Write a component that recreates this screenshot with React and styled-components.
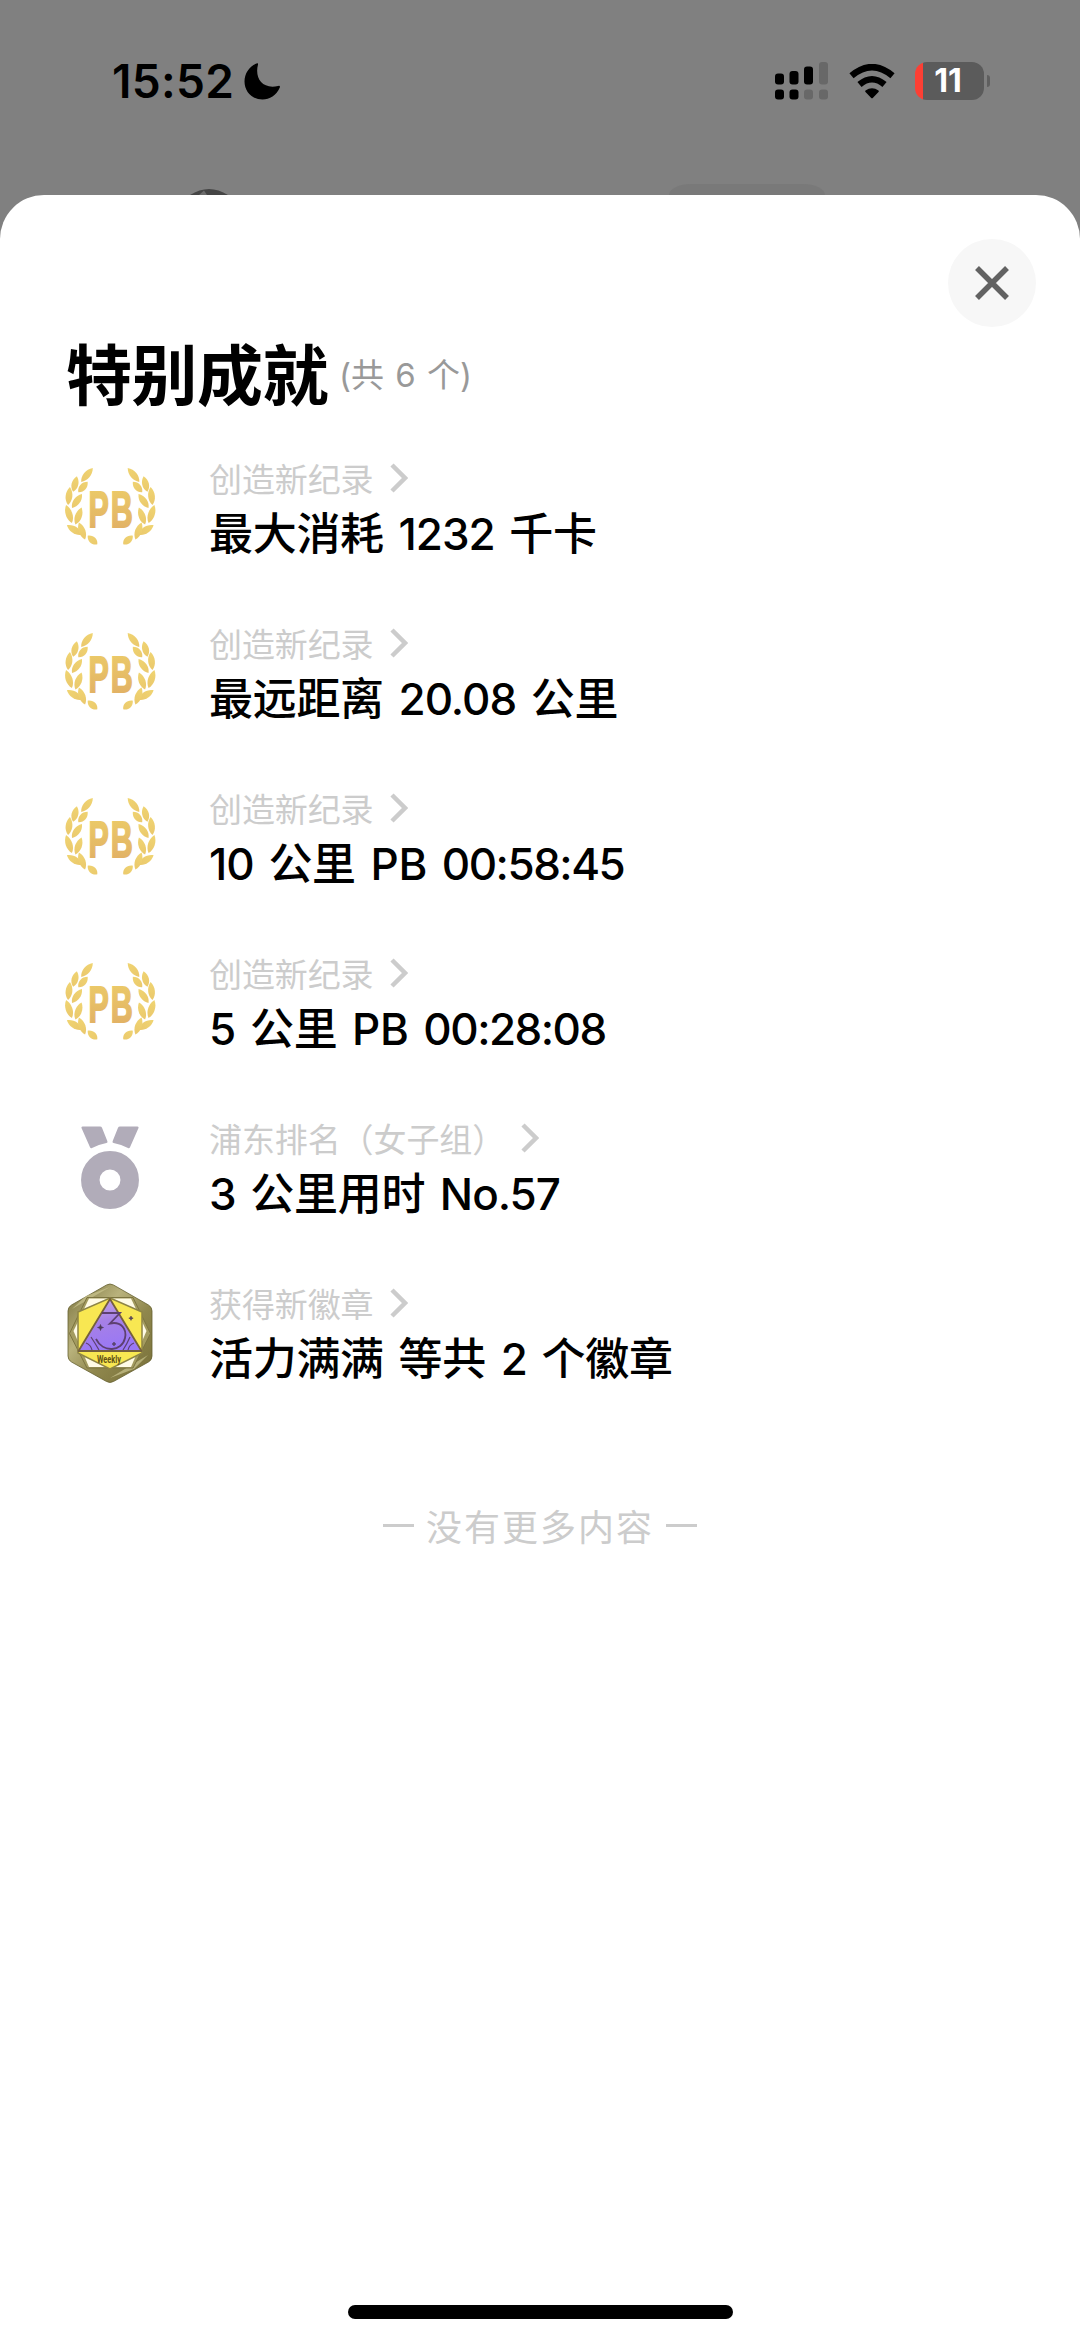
import React from "react"
import styled, { createGlobalStyle } from "styled-components"

const GlobalStyle = createGlobalStyle`
  * {
    box-sizing: border-box;
  }
  body {
    margin: 0;
    background: #808080;
    font-family: Inter, "Noto Sans CJK SC", sans-serif;
  }
`

const achievements = [
  { icon: "pb", label: "创造新纪录", title: "最大消耗 1232 千卡" },
  { icon: "pb", label: "创造新纪录", title: "最远距离 20.08 公里" },
  { icon: "pb", label: "创造新纪录", title: "10 公里 PB 00:58:45" },
  { icon: "pb", label: "创造新纪录", title: "5 公里 PB 00:28:08" },
  { icon: "medal", label: "浦东排名（女子组）", title: "3 公里用时 No.57" },
  { icon: "badge", label: "获得新徽章", title: "活力满满 等共 2 个徽章" },
]

// leaves of the left branch: x, y, rotation, length
const leaves = [
  [37, 25, 40, 18],
  [25, 34, 14, 16],
  [33, 37, 42, 14],
  [19, 46, 6, 18],
  [27, 51, 36, 17],
  [19, 64, -18, 19],
  [28.5, 66, 20, 18],
  [24.5, 80, -58, 18],
  [32, 81, -20, 18],
  [42.5, 90, -48, 13],
]

const Branch = () => (
  <g fill="url(#gold)">
    {leaves.map(([x, y, r, l], i) => (
      <path
        key={i}
        transform={`translate(${x} ${y}) rotate(${r})`}
        d={`M0 ${-l / 2} C4.6 ${-l / 5} 4.4 ${l / 4} 0 ${l / 2} C-4.4 ${l / 4} -4.6 ${-l / 5} 0 ${-l / 2}Z`}
      />
    ))}
  </g>
)

const PbIcon = () => (
  <svg width="120" height="110" viewBox="0 0 120 110">
    <defs>
      <linearGradient id="gold" gradientUnits="userSpaceOnUse" x1="0" y1="-10" x2="0" y2="10">
        <stop offset="0" stopColor="#f0d572" />
        <stop offset="1" stopColor="#eac76c" />
      </linearGradient>
      <linearGradient id="letters" gradientUnits="userSpaceOnUse" x1="0" y1="40" x2="0" y2="78">
        <stop offset="0" stopColor="#ebc968" />
        <stop offset="1" stopColor="#e2b265" />
      </linearGradient>
    </defs>
    <Branch />
    <g transform="translate(120.500 0) scale(-1 1)">
      <Branch />
    </g>
    <PbText x="38.500" y="76.500" textLength="46" lengthAdjust="spacingAndGlyphs">
      PB
    </PbText>
  </svg>
)

const MedalIcon = () => (
  <svg width="120" height="110" viewBox="0 0 120 110" fill="#b1acb9">
    <path d="M32.500 16.500H50q1.500 0 2 1.200l5.400 13.600q.5 1.500-1 1.800-7.800 1.300-14.400 5-1.300.7-2-.8L31.500 18q-.5-1.500 1-1.500Z" />
    <path d="M87.500 16.500H70q-1.500 0-2 1.200l-5.400 13.600q-.5 1.500 1 1.800 7.800 1.300 14.400 5 1.300.7 2-.8l8.500-19.300q.5-1.500-1-1.500Z" />
    <circle cx="60" cy="70" r="19.700" fill="none" stroke="#b1acb9" strokeWidth="18.500" />
  </svg>
)

const WeeklyBadge = () => (
  <svg width="120" height="120" viewBox="0 0 120 120">
    <defs>
      <linearGradient id="rim" x1="0" y1="0" x2="1" y2="1">
        <stop offset="0" stopColor="#77703b" />
        <stop offset="0.35" stopColor="#b9b27c" />
        <stop offset="0.6" stopColor="#8f874d" />
        <stop offset="1" stopColor="#766e38" />
      </linearGradient>
      <linearGradient id="violet" x1="0" y1="0" x2="0.3" y2="1">
        <stop offset="0" stopColor="#c9aee6" />
        <stop offset="0.5" stopColor="#a680e6" />
        <stop offset="1" stopColor="#9a78f5" />
      </linearGradient>
    </defs>
    <path
      d="M56.500 10Q60 8 63.500 10L98.500 30Q102 32 102 36V81Q102 85 98.500 87L63.500 106.500Q60 108.500 56.500 106.500L21.500 87Q18 85 18 81V36Q18 32 21.500 30Z"
      fill="url(#rim)"
      stroke="#655f30"
      strokeWidth="0.800"
    />
    <path d="M22 34L60 12L36 21ZM98 80L60 103L84 94Z" fill="#cbc58f" opacity="0.7" />
    <path d="M37 22.500H83L100.500 58.500L83 93H37L19.500 58.500Z" fill="#a39b60" stroke="#7c7440" />
    <path d="M39 23.500H81L96.500 56L81 92H39L23.500 56Z" fill="#fffbe6" />
    <path d="M60 23L92 37V78L60 94L28 78V37Z" fill="#f8e752" stroke="#8d8445" strokeWidth="1.500" />
    <path d="M60 24L91.500 76H28.500Z" fill="url(#violet)" stroke="#75603c" strokeWidth="1.800" strokeLinejoin="round" />
    <g fill="none" stroke="#5d4070" strokeWidth="1.800">
      <path d="M52 38H70L60 48.500C71 46 77 54 75 63C72 77 53 78 46 64" />
      <path d="M36 68Q41 70 42 75M41 62Q45 68 49 75M84 68Q79 70 78 75M80 62Q77 69 73 75" strokeWidth="1.200" />
    </g>
    <path
      d="M50.500 49.500l.8 2.200 2.200.8-2.200.8-.8 2.200-.8-2.200-2.200-.8 2.200-.8ZM81 41l.6 1.600 1.600.6-1.600.6-.6 1.600-.6-1.600-1.600-.6 1.600-.6ZM64 67l.6 1.400 1.400.6-1.400.6-.6 1.400-.6-1.400-1.400-.6 1.400-.6Z"
      fill="#4e3b58"
      stroke="#4e3b58"
      strokeWidth="0.600"
    />
    <WeeklyText x="47" y="87.500" textLength="24" lengthAdjust="spacingAndGlyphs">
      Weekly
    </WeeklyText>
  </svg>
)

const icons = { pb: PbIcon, medal: MedalIcon, badge: WeeklyBadge }

// numbers are set a little tighter than the rest of the title
const renderTitle = title =>
  title.split(/((?:No\.)?\d[\d.:]*)/).map((part, i) =>
    i % 2 ? (
      <Figure key={i} time={part.includes(":") ? 1 : 0}>
        {part}
      </Figure>
    ) : (
      part
    )
  )

const Achievement = ({ icon, label, title }) => {
  const Icon = icons[icon]
  return (
    <Row>
      <IconBox>
        <Icon />
      </IconBox>
      <RowText>
        <Label>
          {label}
          <Chevron viewBox="0 0 18 30">
            <path d="M2 2L15 15L2 28" />
          </Chevron>
        </Label>
        <RowTitle>{renderTitle(title)}</RowTitle>
      </RowText>
    </Row>
  )
}

const StatusIcons = () => (
  <Indicators>
    <svg width="54" height="38" viewBox="0 0 54 38">
      <rect x="0" y="11.500" width="9" height="11" rx="3" />
      <rect x="14.500" y="9" width="9" height="13.500" rx="3" />
      <rect x="29" y="4.500" width="9" height="18" rx="3" />
      <rect x="44" y="0" width="9" height="22.500" rx="3" fill="#686868" />
      <rect x="0" y="27.500" width="9" height="10" rx="3" />
      <rect x="14.500" y="27.500" width="9" height="10" rx="3" />
      <rect x="29" y="27.500" width="9" height="10" rx="3" fill="#686868" />
      <rect x="44" y="27.500" width="9" height="10" rx="3" fill="#686868" />
    </svg>
    <svg width="46" height="35" viewBox="0 0 46 35">
      <path
        d="M2.500 11.800Q23-5.500 43.500 11.800M10.500 20.500Q23 10 35.500 20.500"
        fill="none"
        stroke="#000"
        strokeWidth="6.500"
      />
      <path d="M16.500 26.500Q23 22 29.500 26.500Q30.300 27.200 29.500 28L24 33.800Q23 34.800 22 33.800L16.500 28Q15.700 27.200 16.500 26.500Z" />
    </svg>
    <BatteryWrap>
      <Battery>11</Battery>
      <BatteryTip />
    </BatteryWrap>
  </Indicators>
)

const App = () => (
  <Screen>
    <GlobalStyle />
    <StatusBar>
      <Clock>
        15:52
        <svg width="37" height="37" viewBox="0 0 37 37">
          <path d="M12.500.5Q14.500-.3 14 1.500C10.500 15 18 26.500 34 23Q36.500 22.300 35.800 24.500C32.500 32.500 25.500 36.500 18.500 36.500C8 36.500.5 28.500.5 18.500C.5 10.500 5 3.500 12.500.5Z" />
        </svg>
      </Clock>
      <StatusIcons />
    </StatusBar>
    <Behind>
      <svg width="38" height="6" viewBox="0 0 38 6">
        <path d="M0 6Q19-6 38 6Z" fill="#454545" />
        <path d="M9 6L14 1.500L17 6Z" fill="#6c6c6c" />
      </svg>
      <Pill />
    </Behind>
    <Sheet>
      <SheetTop>
        <CloseButton aria-label="关闭">
          <svg width="36" height="36" viewBox="0 0 36 36" stroke="#626262" strokeWidth="5.500">
            <path d="M3 3L33 33M33 3L3 33" />
          </svg>
        </CloseButton>
      </SheetTop>
      <Heading>
        <HeadingTitle>特别成就</HeadingTitle>
        <Count>(共 6 个)</Count>
      </Heading>
      <List>
        {achievements.map((item, i) => (
          <Achievement key={i} {...item} />
        ))}
      </List>
      <EndNote>
        <Dash />
        没有更多内容
        <Dash />
      </EndNote>
      <HomeBar />
    </Sheet>
  </Screen>
)

export default App

const Screen = styled.div`
  width: 1080px;
  height: 2341px;
  display: flex;
  flex-direction: column;
  background: #808080;
  overflow: hidden;
`

const StatusBar = styled.header`
  height: 162px;
  display: flex;
  justify-content: space-between;
  align-items: center;
  padding: 0 90px 0 112px;
`

const Clock = styled.div`
  display: flex;
  align-items: center;
  gap: 10px;
  font-size: 46px;
  font-weight: 600;
  letter-spacing: 0.3px;
`

const Indicators = styled.div`
  display: flex;
  align-items: center;
  gap: 20px;
`

const BatteryWrap = styled.div`
  display: flex;
  align-items: center;
  gap: 3px;
`

const Battery = styled.div`
  width: 69px;
  height: 38px;
  border-radius: 12px;
  background: linear-gradient(to right, #fc3f34 8px, #5b5b5b 8px);
  color: #fff;
  font-size: 32px;
  font-weight: 700;
  line-height: 38px;
  text-align: center;
  padding-right: 3px;
`

const BatteryTip = styled.div`
  width: 3px;
  height: 12px;
  border-radius: 0 4px 4px 0;
  background: #5f5f5f;
`

const Behind = styled.div`
  height: 33px;
  display: flex;
  align-items: flex-end;
  padding-left: 190px;
  gap: 441px;
`

const Pill = styled.div`
  width: 156px;
  height: 11px;
  border-radius: 22px 22px 0 0 / 11px 11px 0 0;
  background: #797979;
`

const Sheet = styled.main`
  flex: 1;
  display: flex;
  flex-direction: column;
  background: #fff;
  border-radius: 44px 44px 0 0;
`

const SheetTop = styled.div`
  display: flex;
  justify-content: flex-end;
  padding: 44px 44px 0 0;
`

const CloseButton = styled.button`
  width: 88px;
  height: 88px;
  display: flex;
  align-items: center;
  justify-content: center;
  border: none;
  border-radius: 50%;
  background: #f7f7f7;
  padding: 0;
`

const Heading = styled.div`
  height: 96px;
  display: flex;
  align-items: center;
  gap: 11px;
  padding-left: 66px;
`

const HeadingTitle = styled.h1`
  margin: 0;
  padding-top: 2px;
  font-size: 66px;
  font-weight: 700;
  line-height: 96px;
  letter-spacing: -0.5px;
`

const Count = styled.span`
  padding-bottom: 5px;
  color: #999;
  font-size: 33px;
  word-spacing: 2px;
`

const List = styled.div`
  display: flex;
  flex-direction: column;
  padding: 27px 0 0 50px;
`

const Row = styled.div`
  height: 165px;
  display: flex;
`

const IconBox = styled.div`
  width: 120px;
  margin-right: 39px;
`

const RowText = styled.div`
  display: flex;
  flex-direction: column;
  padding-top: 5px;
`

const Label = styled.div`
  height: 46px;
  display: flex;
  align-items: center;
  gap: 16px;
  margin-bottom: 3px;
  color: #ccc;
  font-size: 33px;
  letter-spacing: -0.1px;
`

const Chevron = styled.svg`
  width: 18px;
  height: 30px;
  margin-bottom: 1px;
  fill: none;
  stroke: #ccc;
  stroke-width: 4.5;
`

const RowTitle = styled.div`
  height: 60px;
  line-height: 60px;
  font-size: 44px;
  font-weight: 500;
  letter-spacing: -0.3px;
  word-spacing: 3.3px;
  white-space: nowrap;
`

const Figure = styled.span`
  letter-spacing: ${props => (props.time ? "-1.5px" : "-1px")};
`

const EndNote = styled.div`
  display: flex;
  align-items: center;
  justify-content: center;
  gap: 12px;
  margin-top: 58px;
  height: 54px;
  color: #ccc;
  font-size: 36px;
  letter-spacing: 2px;
`

const Dash = styled.span`
  width: 31px;
  height: 3px;
  background: #ccc;
`

const HomeBar = styled.div`
  width: 385px;
  height: 14px;
  border-radius: 7px;
  background: #000;
  margin: auto auto 22px;
`

const PbText = styled.text`
  font-family: "Liberation Sans Narrow", "Liberation Sans", Arial, sans-serif;
  font-weight: 700;
  font-size: 50px;
  letter-spacing: 3px;
  fill: url(#letters);
  stroke: url(#letters);
  stroke-width: 1.8px;
`

const WeeklyText = styled.text`
  font-family: Roboto, sans-serif;
  font-weight: 700;
  font-size: 11px;
  fill: #625214;
`
